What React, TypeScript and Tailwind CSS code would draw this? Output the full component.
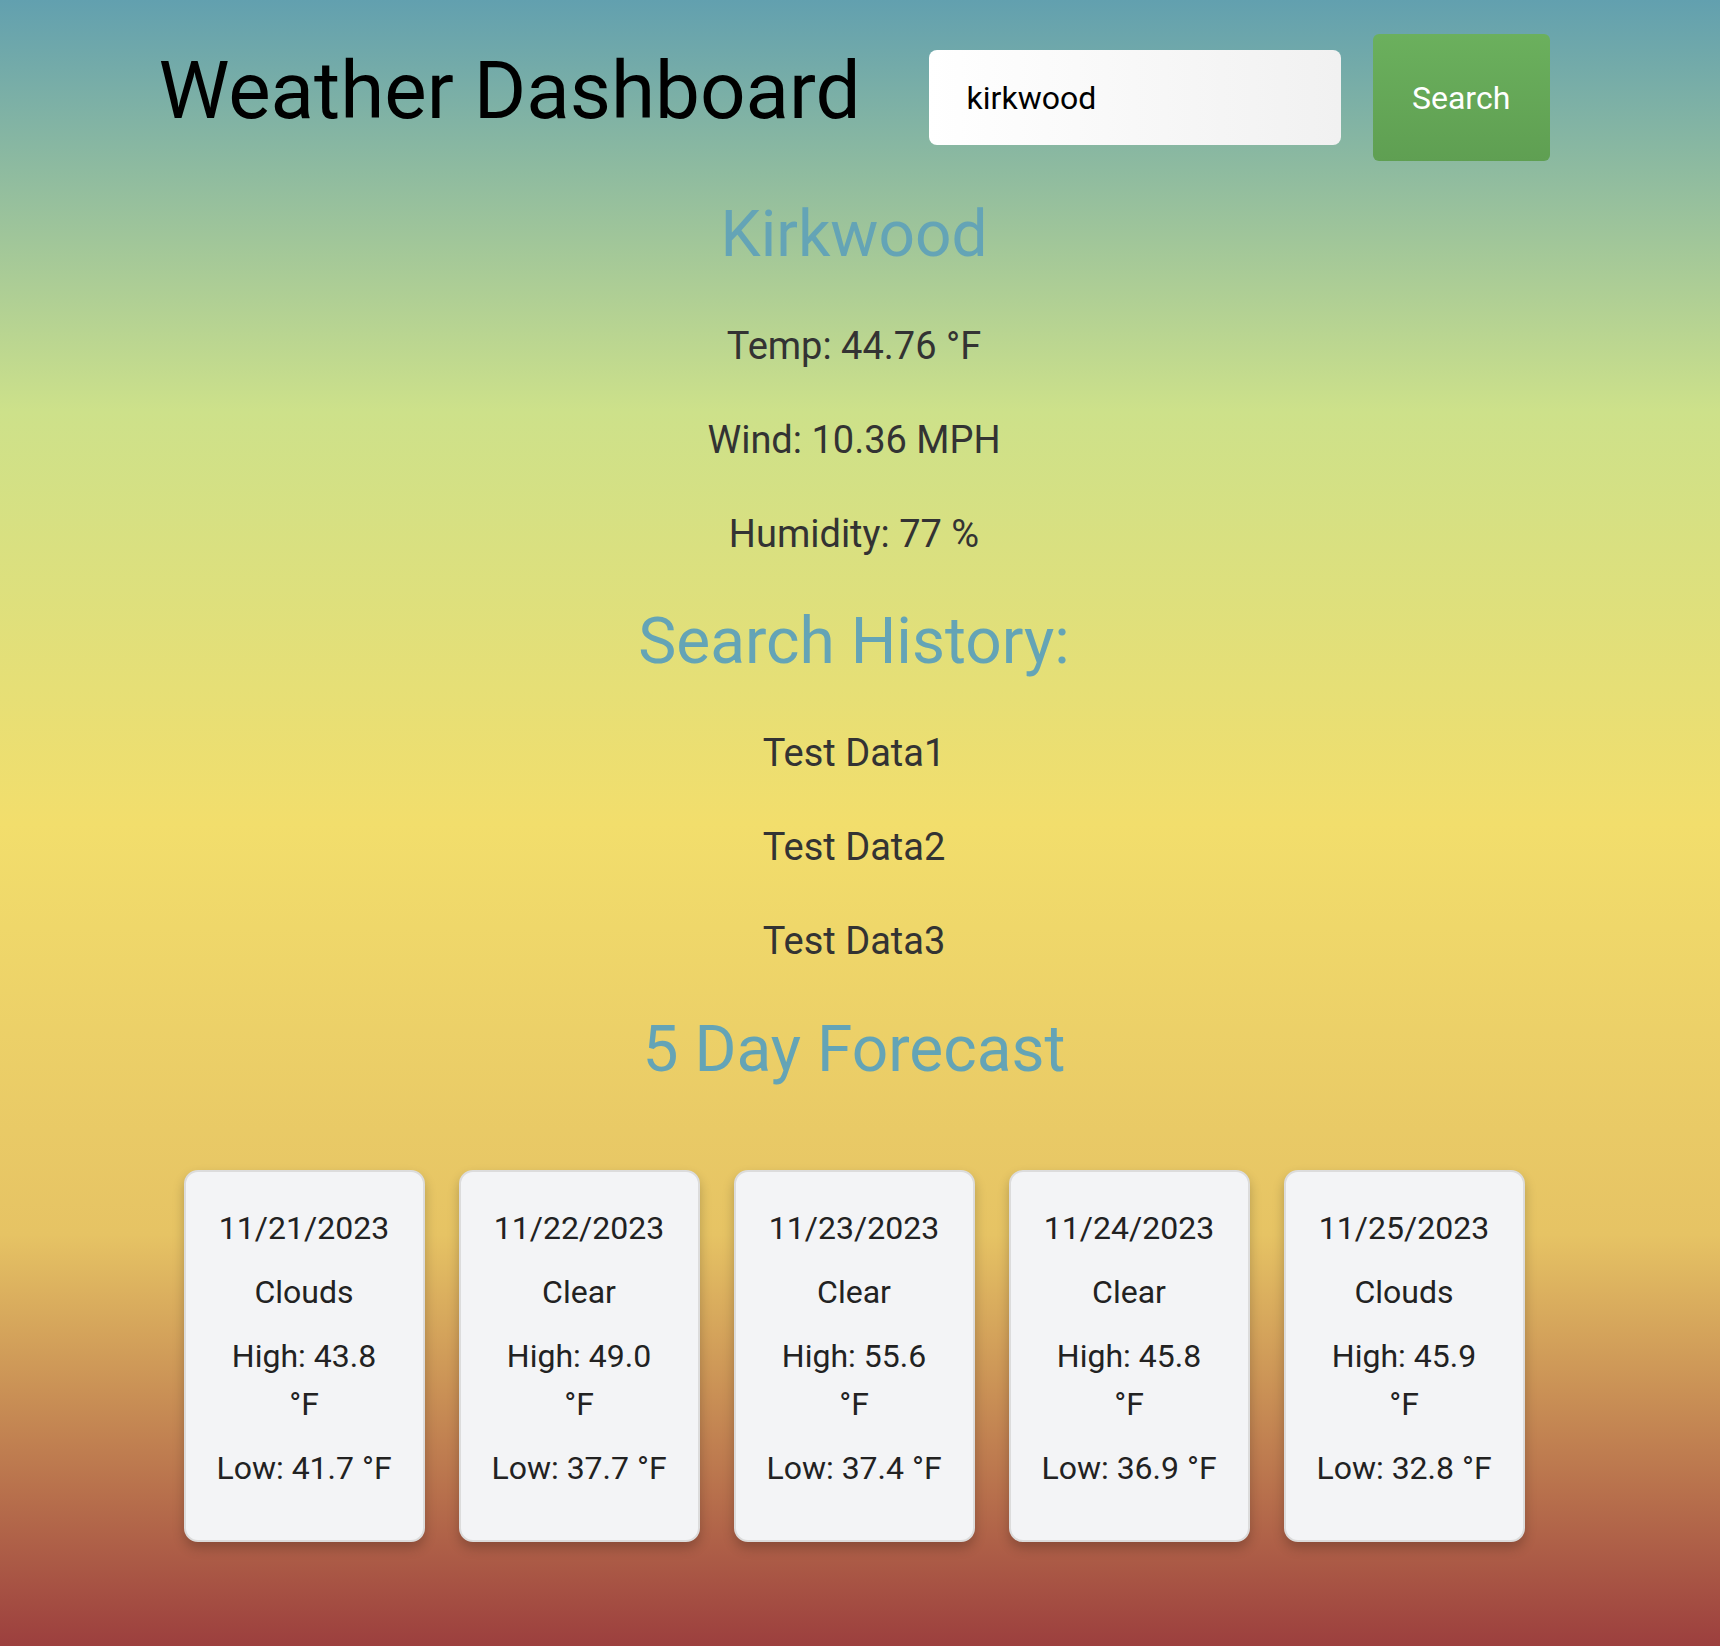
import React from "react";

const forecast = [
  { date: "11/21/2023", main: "Clouds", high: "43.8", low: "41.7" },
  { date: "11/22/2023", main: "Clear", high: "49.0", low: "37.7" },
  { date: "11/23/2023", main: "Clear", high: "55.6", low: "37.4" },
  { date: "11/24/2023", main: "Clear", high: "45.8", low: "36.9" },
  { date: "11/25/2023", main: "Clouds", high: "45.9", low: "32.8" },
];

const history = ["Test Data1", "Test Data2", "Test Data3"];

function ForecastCard({ date, main, high, low }: (typeof forecast)[number]) {
  return (
    <div className="w-[241px] rounded-[14px] border-2 border-[#dcdcdc] bg-[#f3f4f6] px-[30px] pt-8 pb-8 text-center text-[32px] leading-[48px] text-[#222] shadow-[0_6px_12px_rgba(0,0,0,0.22)]">
      <p className="mb-4">{date}</p>
      <p className="mb-4">{main}</p>
      <p className="mb-4">High: {high} °F</p>
      <p className="mb-4">Low: {low} °F</p>
    </div>
  );
}

export default function App() {
  return (
    <div className="min-h-[1646px] bg-[linear-gradient(#62a0af,#cde18a,#f2de6c,#e6c364,#9c3f3e)] pr-[12px] font-['Roboto','Liberation_Sans',sans-serif]">
      <header className="flex items-center justify-center pt-[34px]">
        <h1 className="mr-[68px] mb-[14px] text-[80px] leading-[94px] text-black">Weather Dashboard</h1>
        <input
          type="text"
          defaultValue="kirkwood"
          className="h-[95px] w-[412px] rounded-[8px] bg-[linear-gradient(90deg,#ffffff,#f1f1f1)] px-[38px] text-[32px] text-black outline-none"
        />
        <button className="ml-[32px] h-[127px] w-[177px] rounded-[6px] bg-[linear-gradient(#6bb05d,#5f9f52)] text-[32px] text-white">
          Search
        </button>
      </header>

      <main className="flex flex-col items-center text-center">
        <h2 className="mt-[36px] text-[64px] leading-[76px] text-[#64a4b6]">Kirkwood</h2>
        <div className="mt-[26px] text-[38px] leading-[94px] text-[#333]">
          <p>Temp: 44.76 °F</p>
          <p>Wind: 10.36 MPH</p>
          <p>Humidity: 77 %</p>
        </div>

        <h2 className="mt-[23px] text-[64px] leading-[76px] text-[#64a4b6]">Search History:</h2>
        <ul className="mt-[26px] text-[38px] leading-[94px] text-[#333]">
          {history.map((item) => (
            <li key={item}>{item}</li>
          ))}
        </ul>

        <h2 className="mt-[24px] text-[64px] leading-[76px] text-[#64a4b6]">5 Day Forecast</h2>

        <div className="mt-[82px] flex justify-center gap-[34px]">
          {forecast.map((day) => (
            <ForecastCard key={day.date} {...day} />
          ))}
        </div>
      </main>
    </div>
  );
}
